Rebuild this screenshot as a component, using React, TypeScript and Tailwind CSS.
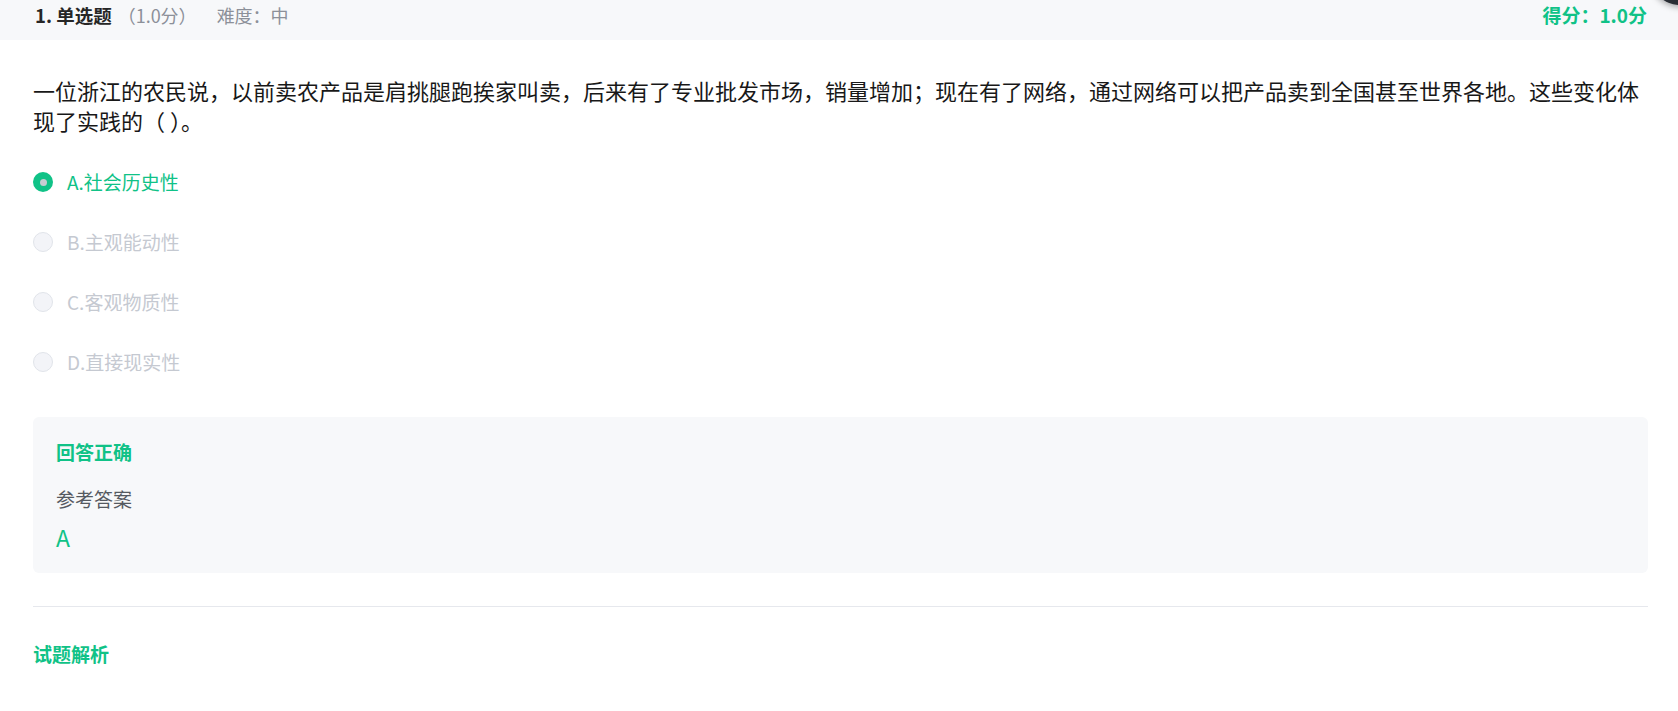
import React from "react";

const GREEN = "text-[#10c287]";

function Radio({ selected }: { selected: boolean }) {
  if (selected) {
    return (
      <span className="flex h-[20px] w-[20px] shrink-0 items-center justify-center rounded-full bg-[#10c287]">
        <span className="h-[7px] w-[7px] rounded-full bg-[#c8ccd2]" />
      </span>
    );
  }
  return (
    <span className="h-[20px] w-[20px] shrink-0 rounded-full border border-[#e1e4ea] bg-[#f3f4f8]" />
  );
}

export default function App() {
  const options = [
    { key: "A", text: "A.社会历史性", selected: true },
    { key: "B", text: "B.主观能动性", selected: false },
    { key: "C", text: "C.客观物质性", selected: false },
    { key: "D", text: "D.直接现实性", selected: false },
  ];
  return (
    <div
      className="relative min-h-[711px] w-full overflow-hidden bg-white"
      style={{ fontFamily: '"Noto Sans CJK SC", "Noto Sans", sans-serif' }}
    >
      {/* floating dark button partially visible */}
      <div className="absolute left-[1650px] top-[-55px] h-[60px] w-[60px] rounded-full bg-[#2a2e35] shadow-[0_2px_6px_rgba(0,0,0,0.35)]" />

      {/* header */}
      <div className="flex h-[40px] items-start justify-between bg-[#f7f8fa] pl-[35px] pr-[31px]">
        <div className="flex items-center text-[18px] leading-[30px]">
          <span className="text-[18.5px] font-bold text-[#262626]">1. 单选题</span>
          <span className="ml-[6px] text-[#8c9099]">（1.0分）</span>
          <span className="ml-[20px] text-[#8c9099]">难度：中</span>
        </div>
        <div className={`text-[19px] font-bold leading-[30px] ${GREEN}`}>得分：1.0分</div>
      </div>

      <div className="pl-[33px] pr-[30px]">
        {/* question */}
        <p className="mt-[35px] text-[22px] leading-[30px] text-[#181818]">
          一位浙江的农民说，以前卖农产品是肩挑腿跑挨家叫卖，后来有了专业批发市场，销量增加；现在有了网络，通过网络可以把产品卖到全国甚至世界各地。这些变化体现了实践的（ ）。
        </p>

        {/* options */}
        <div className="mt-[17px] flex flex-col">
          {options.map((o) => (
            <div key={o.key} className="flex h-[60px] items-center gap-[14px]">
              <Radio selected={o.selected} />
              <span
                className={`text-[19px] leading-[28px] ${o.selected ? GREEN : "text-[#c5c9d1]"}`}
              >
                {o.text}
              </span>
            </div>
          ))}
        </div>

        {/* answer box */}
        <div className="mt-[25px] h-[156px] rounded-[6px] bg-[#f7f8fa] px-[23px] pt-[21px]">
          <div className={`text-[19px] font-bold leading-[28px] ${GREEN}`}>回答正确</div>
          <div className="mt-[19px] text-[19px] leading-[28px] text-[#555a61]">参考答案</div>
          <div className={`mt-[10px] text-[23px] leading-[28px] ${GREEN}`}>A</div>
        </div>

        {/* divider */}
        <div className="mt-[33px] h-px bg-[#e6e8ed]" />

        <div className={`mt-[33px] text-[19px] font-bold leading-[28px] ${GREEN}`}>试题解析</div>
      </div>
    </div>
  );
}
